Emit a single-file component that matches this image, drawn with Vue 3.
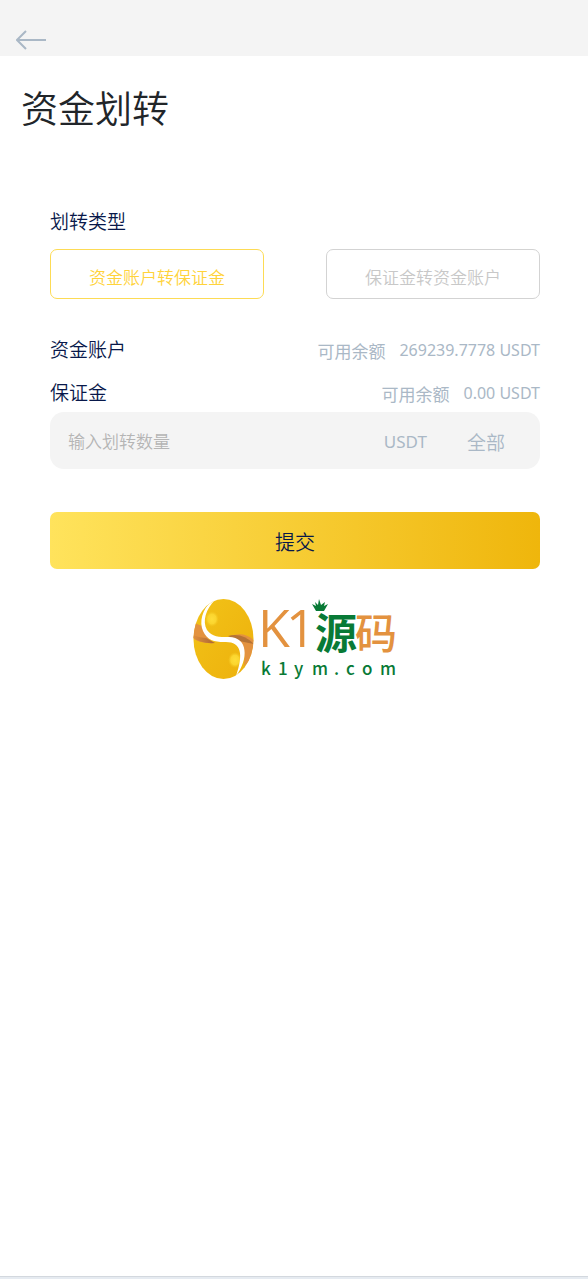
<script setup>
import { ref } from "vue";

const types = [
  { value: "toMargin", label: "资金账户转保证金" },
  { value: "toFund", label: "保证金转资金账户" },
];
const accounts = [
  { name: "资金账户", balance: "269239.7778" },
  { name: "保证金", balance: "0.00" },
];

const active = ref("toMargin");
const amount = ref("");

function fillAll() {
  amount.value = accounts[active.value === "toMargin" ? 0 : 1].balance;
}
</script>

<template>
  <div class="page">
    <header class="nav">
      <button class="back" type="button" aria-label="返回">
        <svg width="32" height="20" viewBox="0 0 32 20" fill="none">
          <path d="M30 10H1M10 1L1 10l9 9" stroke="#aab8c6" stroke-width="2" />
        </svg>
      </button>
    </header>

    <main class="content">
      <h1 class="title">资金划转</h1>

      <form class="form" @submit.prevent>
        <h2 class="label">划转类型</h2>
        <div class="types">
          <button
            v-for="item in types"
            :key="item.value"
            type="button"
            class="type"
            :class="{ active: active === item.value }"
            @click="active = item.value"
          >
            {{ item.label }}
          </button>
        </div>

        <div class="accounts">
          <div v-for="item in accounts" :key="item.name" class="account">
            <span class="label">{{ item.name }}</span>
            <span class="balance">
              <span class="balance-label">可用余额</span>
              <span>{{ item.balance }} USDT</span>
            </span>
          </div>
        </div>

        <div class="amount">
          <input
            v-model="amount"
            class="amount-input"
            type="text"
            aria-label="划转数量"
            placeholder="输入划转数量"
          />
          <span class="unit">USDT</span>
          <button class="all" type="button" @click="fillAll">全部</button>
        </div>

        <button class="submit" type="submit">提交</button>
      </form>

      <svg class="logo" width="204" height="84" viewBox="0 0 204 84">
        <defs>
          <clipPath id="egg"><ellipse cx="31.5" cy="41" rx="30" ry="40" /></clipPath>
          <linearGradient id="gold" x1="0" y1="0" x2="1" y2="1">
            <stop offset="0" stop-color="#f2c318" />
            <stop offset="1" stop-color="#edb00c" />
          </linearGradient>
          <linearGradient id="twist" x1="0" y1="0" x2="1" y2="0">
            <stop offset="0" stop-color="#e3923f" />
            <stop offset="1" stop-color="#aa6632" />
          </linearGradient>
          <radialGradient id="shine">
            <stop offset="0" stop-color="#ffdd39" />
            <stop offset="0.6" stop-color="#fbd52e" />
            <stop offset="1" stop-color="#f2c31c" stop-opacity="0" />
          </radialGradient>
        </defs>
        <g clip-path="url(#egg)">
          <rect width="63" height="84" fill="url(#gold)" />
          <path d="M0 24L10 28Q13 40 22 45Q6 46 0 39z" fill="#e3923f" />
          <path d="M0 37Q8 40 14 40L23 45Q8 46 0 39z" fill="url(#twist)" />
          <path d="M39 38Q52 33 63 43V54Q57 64 52 68Q55 44 39 38z" fill="#e3923f" />
          <path d="M36 38Q50 34 62 46Q51 44 44 42z" fill="#b57335" />
          <ellipse cx="20" cy="21" rx="7" ry="8" fill="url(#shine)" />
          <ellipse cx="43" cy="62" rx="7" ry="8" fill="url(#shine)" />
          <path
            d="M20 3C10 11 7 24 11 33C15 42 22 44 32 44C49 43 52 55 44 78C57 61 56 39 37 39C27 39 20 39 15 32C10 23 14 11 23 2z"
            fill="#fff"
          />
        </g>
        <text class="mark thin" x="66 94" y="49">K1</text>
        <text class="mark green" x="123" y="51">源</text>
        <text class="mark" x="163" y="51">码</text>
        <path
          d="M120 6l4 2-1-4 3 3 1-6 2 6 4-3-1 4 4-2-4 7h-8z"
          fill="#087a36"
        />
        <text
          class="domain"
          x="69 86 102 120 142 154 170 188"
          y="77"
        >k1ym.com</text>
      </svg>
    </main>

    <footer class="bottom"></footer>
  </div>
</template>

<style>
body {
  margin: 0;
  background: #fff;
}
</style>

<style scoped>
.page {
  display: flex;
  flex-direction: column;
  min-height: 100vh;
  color: #08184a;
  font-family: "Noto Sans", "Noto Sans CJK SC", sans-serif;
  font-weight: 350;
}

button,
input {
  margin: 0;
  padding: 0;
  border: 0;
  background: none;
  font: inherit;
}

button {
  cursor: pointer;
}

.nav {
  display: flex;
  align-items: flex-end;
  height: 56px;
  padding: 0 16px 6px;
  box-sizing: border-box;
  background: #f4f4f4;
}

.back {
  display: flex;
}

.content {
  flex: 1;
  display: flex;
  flex-direction: column;
}

.title {
  margin: 25px 21px 0;
  color: #212529;
  font-size: 37px;
  font-weight: 350;
  line-height: 56px;
}

.form {
  display: flex;
  flex-direction: column;
  padding: 71px 48px 0 50px;
}

.label {
  margin: 0;
  font-size: 19px;
  font-weight: 350;
  line-height: 28px;
}

.types {
  display: flex;
  justify-content: space-between;
  gap: 62px;
  margin: 13px 0 31px;
}

.type {
  flex: 1;
  height: 50px;
  padding-top: 4px;
  border: 1px solid #d3d3d3;
  border-radius: 7px;
  color: #c8c8c8;
  font-size: 17px;
}

.type.active {
  border-color: #fddb55;
  color: #ffd33b;
}

.accounts {
  display: grid;
  gap: 3px;
  margin-bottom: -1px;
}

.account {
  display: flex;
  justify-content: space-between;
  align-items: center;
  height: 40px;
}

.balance {
  display: flex;
  align-items: center;
  gap: 14px;
  color: #aab8c6;
  font-size: 16px;
  font-weight: 400;
}

.balance-label {
  font-size: 17px;
}

.amount {
  display: flex;
  align-items: center;
  height: 57px;
  padding: 2px 35px 0 18px;
  box-sizing: border-box;
  border-radius: 14px;
  background: #f4f4f4;
  color: #aab8c6;
}

.amount-input {
  flex: 1;
  min-width: 0;
  height: 40px;
  outline: none;
  color: #08184a;
  font-size: 17px;
}

.amount-input::placeholder {
  color: #b5b5b5;
  opacity: 1;
}

.unit {
  font-size: 17px;
  font-weight: 400;
}

.all {
  margin-left: 40px;
  color: #aab8c6;
  font-size: 19px;
}

.submit {
  height: 57px;
  margin-top: 43px;
  padding-top: 2px;
  border-radius: 7px;
  background: linear-gradient(90deg, #ffe35c, #efb60c);
  color: #08184a;
  font-size: 20px;
}

.logo {
  align-self: center;
  margin: 29px 0;
  overflow: visible;
}

.mark {
  fill: #e3923f;
  font-family: "Noto Sans CJK SC", sans-serif;
  font-size: 42px;
  font-weight: 500;
}

.mark.thin {
  font-family: "Open Sans", sans-serif;
  font-size: 52px;
  font-weight: 400;
}

.mark.green {
  fill: #087a36;
  font-weight: 700;
}

.domain {
  fill: #087a36;
  font-family: "Noto Sans CJK SC", sans-serif;
  font-size: 17px;
  font-weight: 500;
}

.bottom {
  height: 2px;
  border-top: 1px solid #d3d8de;
  background: #e6ebf1;
}
</style>
